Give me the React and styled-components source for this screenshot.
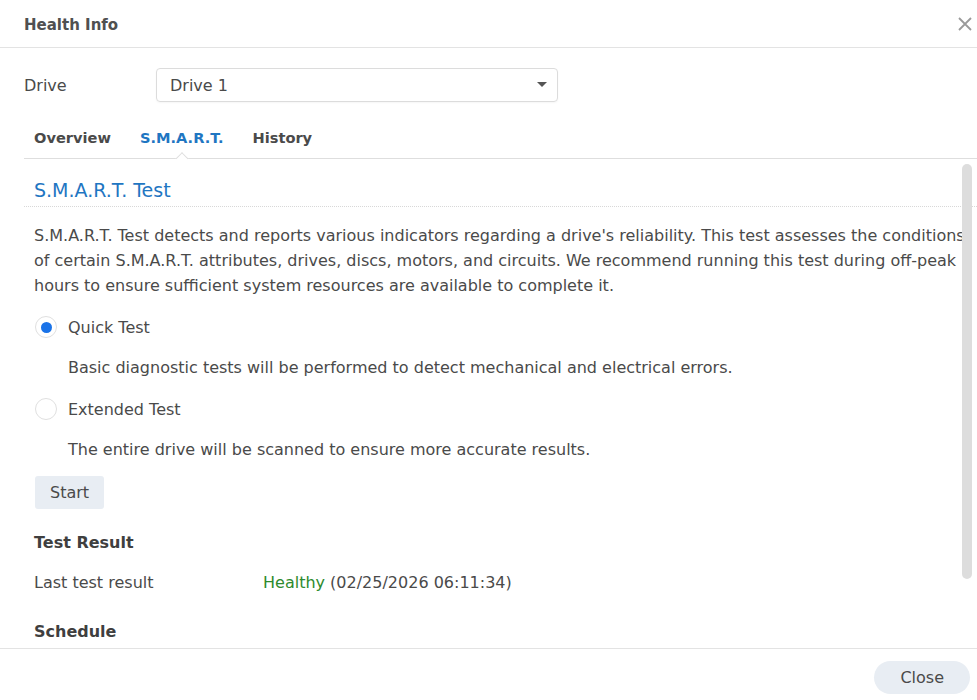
import styled, { createGlobalStyle } from 'styled-components'

const GlobalStyle = createGlobalStyle`
  html, body {
    margin: 0;
    padding: 0;
    background: #ffffff;
  }
  body {
    font-family: "DejaVu Sans", Verdana, sans-serif;
    color: #4a4a4a;
  }
  * { box-sizing: border-box; }
`

const colors = {
  text: '#4a4a4a',
  blue: '#1f76c2',
  line: '#e3e3e3',
  button: '#e8edf3',
  green: '#2d8a2d',
}

const Dialog = styled.div`
  width: 977px;
  height: 700px;
  display: flex;
  flex-direction: column;
  background: #fff;
  overflow: hidden;
`

const Header = styled.div`
  height: 48px;
  flex: none;
  display: flex;
  align-items: center;
  justify-content: space-between;
  padding: 2px 4px 0 24px;
  border-bottom: 1px solid ${colors.line};
`

const Title = styled.h1`
  margin: 0;
  font-size: 15px;
  font-weight: bold;
  color: #505050;
`

const CloseIcon = styled.button`
  border: none;
  background: none;
  padding: 0;
  margin-top: -1px;
  width: 16px;
  height: 16px;
  display: flex;
  align-items: center;
  justify-content: center;
  cursor: pointer;
`

const DriveRow = styled.div`
  flex: none;
  display: flex;
  align-items: center;
  padding: 20px 0 0 24px;
`

const FieldLabel = styled.span`
  width: 132px;
  font-size: 16px;
  color: ${colors.text};
`

const Select = styled.div`
  width: 402px;
  height: 34px;
  display: flex;
  align-items: center;
  justify-content: space-between;
  padding: 0 10px 0 13px;
  border: 1px solid #dcdcdc;
  border-radius: 4px;
  font-size: 16px;
  box-shadow: 0 1px 2px rgba(0, 0, 0, 0.04);
`

const Tabs = styled.div`
  flex: none;
  display: flex;
  margin: 15px 0 0 24px;
  height: 42px;
  border-bottom: 1px solid #dedede;
`

const Tab = styled.div`
  position: relative;
  padding: 0 10px;
  margin-right: 9px;
  display: flex;
  align-items: center;
  font-size: 14.6px;
  font-weight: bold;
  color: ${({ $active }) => ($active ? colors.blue : '#4a4a4a')};

  ${({ $active }) =>
    $active &&
    `
    &::after {
      content: '';
      position: absolute;
      left: 50%;
      bottom: -5px;
      width: 8px;
      height: 8px;
      background: #fff;
      border-left: 1px solid #dedede;
      border-top: 1px solid #dedede;
      transform: translateX(-50%) rotate(45deg);
    }
  `}
`

const ScrollArea = styled.div`
  position: relative;
  flex: 1;
  min-height: 0;
`

const Scroller = styled.div`
  height: 100%;
  overflow: hidden;
  padding-left: 24px;
`

const ScrollThumb = styled.div`
  position: absolute;
  top: 5px;
  right: 5px;
  width: 10px;
  height: 415px;
  border-radius: 5px;
  background: #dddddd;
`

const SectionTitle = styled.h2`
  margin: 0;
  padding: 20px 10px 5px;
  font-size: 19px;
  font-weight: normal;
  color: ${colors.blue};
  border-bottom: 1px dotted #d8d8d8;
`

const Body = styled.div`
  padding: 0 8px 0 10px;
  font-size: 16px;
`

const Paragraph = styled.p`
  margin: 16px 0 0;
  line-height: 25px;
  color: ${colors.text};
`

const RadioRow = styled.label`
  display: flex;
  align-items: center;
  gap: 11px;
  height: 24px;
  margin-top: 17px;
`

const RadioCircle = styled.span`
  width: 22px;
  height: 22px;
  margin-left: 1px;
  border-radius: 50%;
  border: 1px solid #e0e0e0;
  background: #fff;
  display: flex;
  align-items: center;
  justify-content: center;

  &::after {
    content: '';
    width: 11px;
    height: 11px;
    border-radius: 50%;
    background: ${({ $checked }) => ($checked ? '#1a73e8' : 'transparent')};
  }
`

const Hint = styled.div`
  margin: 17px 0 0 34px;
  line-height: 24px;
`

const Button = styled.button`
  border: none;
  background: ${colors.button};
  color: #4a4a4a;
  font-family: inherit;
  font-size: 16px;
  height: 33px;
  padding: 0 ${({ $pill }) => ($pill ? '26px' : '15px')};
  border-radius: ${({ $pill }) => ($pill ? '17px' : '3px')};
  cursor: pointer;
`

const StartWrap = styled.div`
  margin-top: 14px;
  margin-left: 1px;
`

const SubTitle = styled.h3`
  margin: ${({ $gap }) => $gap || '24px'} 0 0;
  font-size: 16px;
  font-weight: bold;
  color: #3f3f3f;
  line-height: 20px;
`

const InfoRow = styled.div`
  display: flex;
  margin-top: 20px;
  line-height: 20px;
`

const InfoLabel = styled.span`
  width: 229px;
`

const Healthy = styled.span`
  color: ${colors.green};
`

const Footer = styled.div`
  flex: none;
  height: 52px;
  border-top: 1px solid ${colors.line};
  display: flex;
  align-items: flex-start;
  justify-content: flex-end;
  padding: 12px 7px 0 0;
`

function App() {
  return (
    <>
      <GlobalStyle />
      <Dialog>
        <Header>
          <Title>Health Info</Title>
          <CloseIcon aria-label="close">
            <svg width="14" height="14" viewBox="0 0 14 14">
              <path d="M1 1 L13 13 M13 1 L1 13" stroke="#9a9a9a" strokeWidth="1.8" />
            </svg>
          </CloseIcon>
        </Header>

        <DriveRow>
          <FieldLabel>Drive</FieldLabel>
          <Select>
            <span>Drive 1</span>
            <svg width="10" height="6" viewBox="0 0 10 6">
              <path d="M0 0 H10 L5 5 Z" fill="#555" />
            </svg>
          </Select>
        </DriveRow>

        <Tabs>
          <Tab>Overview</Tab>
          <Tab $active>S.M.A.R.T.</Tab>
          <Tab>History</Tab>
        </Tabs>

        <ScrollArea>
          <Scroller>
            <SectionTitle>S.M.A.R.T. Test</SectionTitle>
            <Body>
              <Paragraph>
                S.M.A.R.T. Test detects and reports various indicators regarding a drive's reliability. This test
                assesses the conditions of certain S.M.A.R.T. attributes, drives, discs, motors, and circuits. We
                recommend running this test during off-peak hours to ensure sufficient system resources are
                available to complete it.
              </Paragraph>

              <RadioRow>
                <RadioCircle $checked />
                Quick Test
              </RadioRow>
              <Hint>Basic diagnostic tests will be performed to detect mechanical and electrical errors.</Hint>

              <RadioRow>
                <RadioCircle />
                Extended Test
              </RadioRow>
              <Hint>The entire drive will be scanned to ensure more accurate results.</Hint>

              <StartWrap>
                <Button>Start</Button>
              </StartWrap>

              <SubTitle>Test Result</SubTitle>
              <InfoRow>
                <InfoLabel>Last test result</InfoLabel>
                <span>
                  <Healthy>Healthy</Healthy> (02/25/2026 06:11:34)
                </span>
              </InfoRow>

              <SubTitle $gap="29px">Schedule</SubTitle>
            </Body>
          </Scroller>
          <ScrollThumb />
        </ScrollArea>

        <Footer>
          <Button $pill>Close</Button>
        </Footer>
      </Dialog>
    </>
  )
}

export default App
